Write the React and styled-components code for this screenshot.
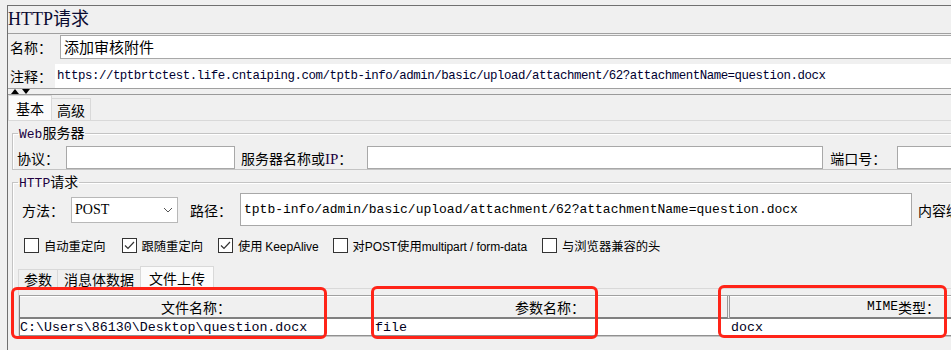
import React from 'react';
import styled, { createGlobalStyle } from 'styled-components';

const CJK = '"Noto Sans CJK SC", sans-serif';
const MONO = '"Liberation Mono", "Noto Sans CJK SC", monospace';

const GlobalStyle = createGlobalStyle`
  body {
    margin: 0;
    background: #f0f0f0;
    overflow: hidden;
  }
`;

const Page = styled.div`
  position: relative;
  width: 951px;
  height: 350px;
  overflow: hidden;
  box-sizing: border-box;
  padding: 5px 0 0 7px;
  font-family: ${CJK};
  font-size: 14px;
  color: #000;
`;

const Frame = styled.div`
  width: 1120px;
  height: 400px;
  border-top: 1px solid #707070;
  border-left: 1px solid #707070;
`;

const Title = styled.div`
  height: 27px;
  line-height: 27px;
  font-family: "Liberation Serif", "Noto Sans CJK SC", serif;
  font-size: 18px;
  color: #0a0a30;
`;

const NamePanel = styled.div`
  border-top: 1px solid #a0a0a0;
  border-bottom: 1px solid #a0a0a0;
`;

const Row = styled.div`
  display: flex;
  align-items: center;
  height: ${(p) => p.$h || 24}px;
  margin-top: ${(p) => p.$mt || 0}px;
  padding-left: ${(p) => p.$pl || 0}px;
`;

const Label = styled.span`
  flex: none;
  white-space: nowrap;
  font-size: ${(p) => p.$size || 14}px;
  margin-left: ${(p) => p.$ml || 0}px;
  margin-right: ${(p) => p.$mr || 0}px;
`;

const Latin = styled.span`
  font-family: "Liberation Serif", serif;
  font-size: 15px;
  color: #200040;
`;

const TextBox = styled.div`
  flex: none;
  box-sizing: border-box;
  width: ${(p) => p.$w}px;
  height: ${(p) => p.$h || 24}px;
  border: 1px solid #a8a8a8;
  background: #fff;
  display: flex;
  align-items: center;
  padding-left: 3px;
  font-family: ${(p) => (p.$mono ? MONO : CJK)};
  font-size: ${(p) => p.$size || 14}px;
  white-space: nowrap;
  overflow: hidden;
`;

const CommentField = styled.div`
  flex: 1;
  height: 24px;
  background: #fff;
  display: flex;
  align-items: center;
  padding-left: 2px;
  font-family: ${MONO};
  font-size: 12.4px;
  letter-spacing: -0.45px;
  color: #000030;
  white-space: nowrap;
`;

const Splitter = styled.div`
  height: 5px;
  display: flex;
  align-items: flex-start;
  gap: 3px;
  padding-left: 3px;
  overflow: hidden;
`;

const TabArea = styled.div`
  border-top: 1px solid #9a9a9a;
`;

const TabStrip = styled.div`
  display: flex;
  align-items: flex-end;
  height: ${(p) => p.$h}px;
  margin-left: ${(p) => p.$ml || 0}px;
  margin-top: ${(p) => p.$mt || 0}px;
`;

const Tab = styled.div`
  box-sizing: border-box;
  height: ${(p) => (p.$active ? p.$h : p.$h - 3)}px;
  padding: 0 ${(p) => p.$px || 6}px;
  display: flex;
  align-items: center;
  background: ${(p) => (p.$active ? '#fbfbfb' : '#f0f0f0')};
  border: 1px solid #d9d9d9;
  border-bottom: none;
  margin-left: -1px;
  font-size: 14px;
  &:first-child {
    margin-left: 0;
  }
`;

const TabPanel = styled.div`
  border-top: 1px solid #d9d9d9;
  padding-left: 4px;
`;

const Group = styled.fieldset`
  margin: ${(p) => p.$mt || 0}px 0 0 0;
  padding: ${(p) => p.$pt || 0}px 0 ${(p) => p.$pb || 0}px 0;
  border: 1px solid #c4c4c4;
  box-shadow: inset 1px 1px 0 #fff;
  width: 1080px;
  min-width: 0;
`;

const Legend = styled.legend`
  margin-left: 5px;
  padding: 0 1px;
  font-size: 14px;
  line-height: 16px;
`;

const LegendLatin = styled.span`
  font-family: "Liberation Mono", monospace;
  font-size: 13px;
  color: #200040;
`;

const Select = styled.div`
  flex: none;
  box-sizing: border-box;
  width: 107px;
  height: 26px;
  border: 1px solid #b8b8b8;
  background: #fff;
  display: flex;
  align-items: center;
  justify-content: space-between;
  padding: 0 4px 0 3px;
  font-family: "Liberation Serif", serif;
  font-size: 14px;
`;

const CheckRow = styled.div`
  display: flex;
  align-items: center;
  height: 15px;
  margin-top: 12px;
  padding-left: 11px;
`;

const Check = styled.label`
  display: flex;
  align-items: center;
  gap: 5px;
  margin-right: ${(p) => p.$mr}px;
  font-size: 12.3px;
  white-space: nowrap;
`;

const Box = styled.span`
  box-sizing: border-box;
  width: 15px;
  height: 15px;
  border: 1px solid #333;
  background: #fff;
  display: flex;
  align-items: center;
  justify-content: center;
`;

const Sans = styled.span`
  font-family: "Liberation Sans", Arial, sans-serif;
  font-size: 12px;
  letter-spacing: -0.1px;
`;

const SubPanel = styled.div`
  margin-left: 5px;
  border-top: 1px solid #d9d9d9;
  border-left: 1px solid #d9d9d9;
  padding: 6px 0 0 0;
`;

const Table = styled.div`
  display: grid;
  grid-template-columns: 353px 357px 348px;
  width: 1058px;
  border-top: 1px solid #a0a0a0;
  border-left: 1px solid #808080;
`;

const HeadCell = styled.div`
  height: 21px;
  display: flex;
  align-items: center;
  justify-content: center;
  background: #f0f0f0;
  border-right: ${(p) => (p.$double ? '3px double #9a9a9a' : '1px solid #b0b0b0')};
  border-bottom: 2px solid #808080;
  box-shadow: inset 0 1px 0 #fff;
  font-size: 14px;
`;

const HeadMono = styled.span`
  font-family: "Liberation Mono", monospace;
  font-size: 13px;
`;

const DataCell = styled.div`
  height: 16px;
  display: flex;
  align-items: center;
  padding-left: ${(p) => p.$pl || 0}px;
  background: #fff;
  border-bottom: 1px solid #909090;
  font-family: ${MONO};
  font-size: 13.3px;
  color: #000020;
  white-space: nowrap;
  overflow: hidden;
`;

const Mark = styled.div`
  position: absolute;
  left: ${(p) => p.$x}px;
  top: ${(p) => p.$y}px;
  width: ${(p) => p.$w}px;
  height: ${(p) => p.$h}px;
  box-sizing: border-box;
  border: 3px solid #ff2418;
  border-radius: 6px;
  pointer-events: none;
`;

const Tick = () => (
  <svg width="11" height="9" viewBox="0 0 11 9">
    <polyline points="1,4.5 4,7.5 10,1" fill="none" stroke="#333" strokeWidth="1.2" />
  </svg>
);

const Chevron = () => (
  <svg width="10" height="6" viewBox="0 0 10 6">
    <polyline points="1,1 5,5 9,1" fill="none" stroke="#555" strokeWidth="1" />
  </svg>
);

const Arrow = ({ up }) => (
  <svg width="8" height="5" viewBox="0 0 8 5">
    <polygon points={up ? '4,0 8,5 0,5' : '0,0 8,0 4,5'} fill="#000" />
  </svg>
);

const checks = [
  { label: '自动重定向', on: false, mr: 16 },
  { label: '跟随重定向', on: true, mr: 15 },
  { label: <>使用 <Sans>KeepAlive</Sans></>, on: true, mr: 14 },
  { label: <>对<Sans>POST</Sans>使用<Sans>multipart / form-data</Sans></>, on: false, mr: 15 },
  { label: '与浏览器兼容的头', on: false, mr: 0 },
];

export default function App() {
  return (
    <Page>
      <GlobalStyle />
      <Frame>
        <Title>HTTP请求</Title>
        <NamePanel>
          <Row $h={25} $pl={2}>
            <Label $mr={8}>名称：</Label>
            <TextBox $w={1000} $size={15}>添加审核附件</TextBox>
          </Row>
          <Row $h={24} $mt={5} $pl={2}>
            <Label $mr={3}>注释：</Label>
            <CommentField>
              https://tptbrtctest.life.cntaiping.com/tptb-info/admin/basic/upload/attachment/62?attachmentName=question.docx
            </CommentField>
          </Row>
        </NamePanel>
        <Splitter>
          <Arrow up />
          <Arrow />
        </Splitter>
        <TabArea>
          <TabStrip $h={25}>
            <Tab $h={25} $active $px={7}>基本</Tab>
            <Tab $h={25} $px={5}>高级</Tab>
          </TabStrip>
          <TabPanel>
            <Group $mt={3} $pt={3} $pb={0}>
              <Legend><LegendLatin>Web</LegendLatin>服务器</Legend>
              <Row $h={23} $pl={4}>
                <Label $mr={7}>协议：</Label>
                <TextBox $w={169} $h={23} />
                <Label $ml={6} $mr={15}>服务器名称或<Latin>IP</Latin>：</Label>
                <TextBox $w={456} $h={23} />
                <Label $ml={7} $mr={11}>端口号：</Label>
                <TextBox $w={120} $h={23} />
              </Row>
            </Group>
            <Group $mt={3} $pt={1} $pb={0}>
              <Legend><LegendLatin>HTTP</LegendLatin>请求</Legend>
              <Row $h={33} $pl={9}>
                <Label $mr={7}>方法：</Label>
                <Select>
                  POST
                  <Chevron />
                </Select>
                <Label $ml={12} $mr={8}>路径：</Label>
                <TextBox $w={672} $h={33} $mono $size={13}>
                  tptb-info/admin/basic/upload/attachment/62?attachmentName=question.docx
                </TextBox>
                <Label $ml={6}>内容编码：</Label>
              </Row>
              <CheckRow>
                {checks.map((c, i) => (
                  <Check key={i} $mr={c.mr}>
                    <Box>{c.on && <Tick />}</Box>
                    <span>{c.label}</span>
                  </Check>
                ))}
              </CheckRow>
              <TabStrip $h={22} $ml={5} $mt={13}>
                <Tab $h={22} $px={5}>参数</Tab>
                <Tab $h={22} $px={6}>消息体数据</Tab>
                <Tab $h={22} $active $px={8}>文件上传</Tab>
              </TabStrip>
              <SubPanel>
                <Table>
                  <HeadCell>文件名称：</HeadCell>
                  <HeadCell $double>参数名称：</HeadCell>
                  <HeadCell><HeadMono>MIME</HeadMono>类型：</HeadCell>
                  <DataCell>C:\Users\86130\Desktop\question.docx</DataCell>
                  <DataCell $pl={2}>file</DataCell>
                  <DataCell $pl={1}>docx</DataCell>
                </Table>
              </SubPanel>
            </Group>
          </TabPanel>
        </TabArea>
      </Frame>
      <Mark $x={11} $y={287} $w={316} $h={52} />
      <Mark $x={371} $y={286} $w={227} $h={53} />
      <Mark $x={718} $y={285} $w={229} $h={53} />
    </Page>
  );
}
